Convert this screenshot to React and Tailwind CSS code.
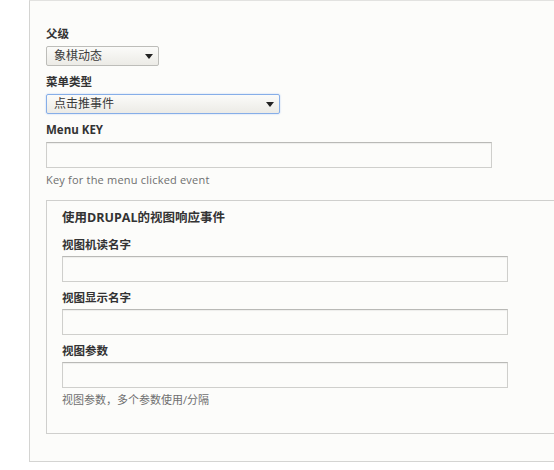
const font = { fontFamily: '"Open Sans", "Noto Sans CJK SC", sans-serif' };

function Label({ children, className = '' }) {
  return (
    <div className={`text-[11.5px] leading-4 font-bold text-[#333] ${className}`}>{children}</div>
  );
}

function Select({ value, width, focused }) {
  return (
    <div
      className={`mt-[4px] flex items-center justify-between h-[20px] rounded-[2px] border pl-[7px] pr-[5px] bg-gradient-to-b from-[#fbfbf9] to-[#ecebe6] ${
        focused ? 'border-[#86aee8] shadow-[0_0_2px_#b7cff3]' : 'border-[#bdbdb9]'
      }`}
      style={{ width }}
    >
      <span className="text-[12px] leading-4 text-[#3a3a3a]">{value}</span>
      <svg width="8" height="5" viewBox="0 0 8 5">
        <path d="M0 0h8L4 5z" fill="#222" />
      </svg>
    </div>
  );
}

function TextInput({ className = '' }) {
  return (
    <div
      className={`w-[446px] h-[26px] border border-[#cfcfcc] border-t-[#b9b9b6] bg-[#fcfcfa] shadow-[inset_0_1px_1px_rgba(0,0,0,0.06)] ${className}`}
    />
  );
}

export default function App() {
  return (
    <div className="w-[554px] h-[470px] overflow-hidden bg-white" style={font}>
      <div className="ml-[29px] w-[600px] border border-[#d4d4d2] border-t-[#e2e2e0] bg-[#fcfcfa] pl-[16px] pt-[25px] pb-[27px]">
        <Label>父级</Label>
        <Select value="象棋动态" width={113} />

        <Label className="mt-[8px]">菜单类型</Label>
        <Select value="点击推事件" width={234} focused />

        <Label className="mt-[8px]">Menu KEY</Label>
        <TextInput className="mt-[4px] h-[25px]" />
        <div className="mt-[5px] text-[11px] leading-[14px] tracking-[0.2px] text-[#6f6f6f]">Key for the menu clicked event</div>

        <div className="mt-[13px] w-[560px] border border-[#cfcfcd] pl-[15px] pt-[9px] pb-[26px]">
          <div className="text-[12.5px] leading-4 font-bold text-[#333]">使用DRUPAL的视图响应事件</div>

          <Label className="mt-[11px]">视图机读名字</Label>
          <TextInput className="mt-[3px]" />

          <Label className="mt-[8px]">视图显示名字</Label>
          <TextInput className="mt-[3px]" />

          <Label className="mt-[8px]">视图参数</Label>
          <TextInput className="mt-[3px]" />
          <div className="mt-[5px] text-[11px] leading-[14px] text-[#6f6f6f]">视图参数，多个参数使用/分隔</div>
        </div>
      </div>
    </div>
  );
}
